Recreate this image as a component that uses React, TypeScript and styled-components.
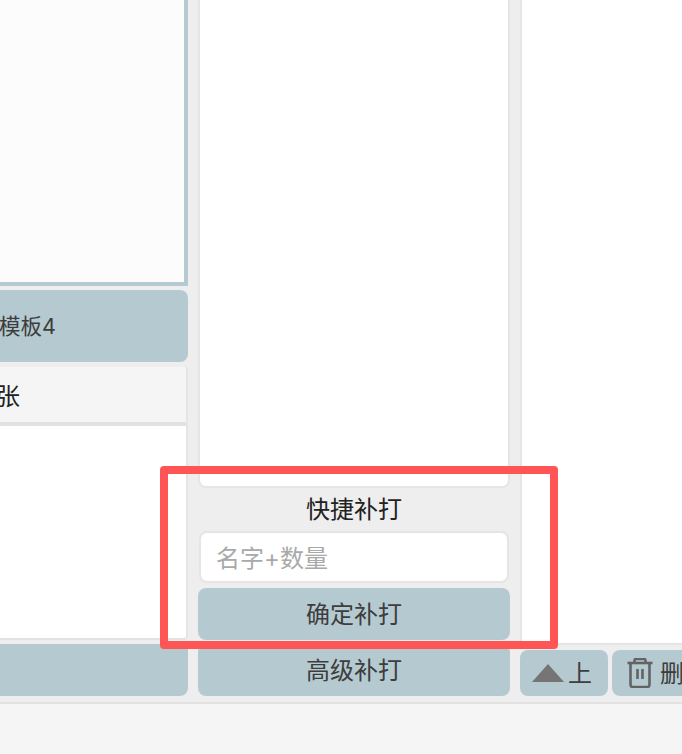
import React from "react";
import styled, { createGlobalStyle } from "styled-components";

const Global = createGlobalStyle`
  html, body { margin: 0; padding: 0; background: #f5f5f5; }
  * { box-sizing: border-box; }
  body { font-family: Inter, "Noto Sans CJK SC", sans-serif; color: #333; }
`;

const Page = styled.div`
  position: relative;
  width: 682px;
  height: 754px;
  overflow: hidden;
  display: flex;
  flex-direction: column;
  background: #f5f5f5;
`;

const Workspace = styled.main`
  height: 704px;
  flex: none;
  display: flex;
  background: #eeeeee;
  border-bottom: 2px solid #e2e2e2;
`;

const Column = styled.section<{ $width: number; $gap: number }>`
  width: ${(p) => p.$width}px;
  margin-right: ${(p) => p.$gap}px;
  flex: none;
  display: flex;
  flex-direction: column;
`;

const TemplatePreview = styled.div`
  height: 286px;
  background: #fcfcfc;
  border-right: 4px solid #b5cad0;
  border-bottom: 4px solid #b5cad0;
`;

const ActionButton = styled.button<{ $height: number; $top: number; $clipRight?: number }>`
  height: ${(p) => p.$height}px;
  margin: ${(p) => p.$top}px 0 0;
  padding: 0 ${(p) => p.$clipRight ?? 0}px 4px 0;
  width: 100%;
  flex: none;
  display: flex;
  align-items: center;
  justify-content: ${(p) => (p.$clipRight ? "flex-end" : "center")};
  border: 0;
  border-radius: 8px;
  background: #b5cad0;
  color: #3d3d3d;
  font: inherit;
  font-size: 24px;
  white-space: nowrap;
`;

const TemplateButton = styled(ActionButton)`
  border-radius: 0 8px 8px 0;
  font-size: 21.5px;
`;

const WideLeftButton = styled(ActionButton)`
  border-radius: 0 0 8px 0;
`;

const ListCard = styled.div`
  margin-top: 5px;
  height: 273px;
  flex: none;
  display: flex;
  flex-direction: column;
  background: #ffffff;
  border-right: 2px solid #e5e5e5;
  border-bottom: 2px solid #e2e2e2;
  border-radius: 0 4px 4px 0;
  overflow: hidden;
`;

const ListHeader = styled.div`
  height: 59px;
  flex: none;
  display: flex;
  align-items: center;
  justify-content: flex-end;
  padding-right: 166px;
  background: #f5f5f5;
  border-bottom: 4px solid #e2e2e2;
  color: #222;
  font-size: 24px;
  white-space: nowrap;
  overflow: hidden;
`;

const ListPanel = styled.div`
  height: 488px;
  flex: none;
  background: #ffffff;
  border: 2px solid #e5e5e5;
  border-top: 0;
  border-radius: 0 0 8px 8px;
`;

const SectionTitle = styled.div`
  height: 43px;
  flex: none;
  display: flex;
  align-items: center;
  justify-content: center;
  padding-bottom: 4px;
  color: #222;
  font-size: 24px;
`;

const QuickInput = styled.input`
  display: block;
  flex: none;
  width: 310px;
  height: 52px;
  margin-left: 1px;
  padding: 2px 15px 0;
  border: 2px solid #e5e5e5;
  border-radius: 8px;
  background: #ffffff;
  font: inherit;
  font-size: 24px;
  outline: none;
  &::placeholder { color: #a9a9a9; opacity: 1; }
`;

const RightPanel = styled.div`
  height: 645px;
  flex: none;
  background: #ffffff;
  border-left: 2px solid #e5e5e5;
  border-bottom: 2px solid #e5e5e5;
`;

const Toolbar = styled.div`
  display: flex;
  gap: 4px;
  margin-top: 5px;
`;

const ToolButton = styled.button<{ $width: number }>`
  width: ${(p) => p.$width}px;
  height: 46px;
  flex: none;
  display: flex;
  align-items: center;
  gap: 4px;
  padding: 0 0 0 12px;
  border: 0;
  border-radius: 8px;
  background: #b5cad0;
  color: #3d3d3d;
  font: inherit;
  font-size: 24px;
  white-space: nowrap;
  overflow: hidden;
`;

const TrashButton = styled(ToolButton)`
  padding-left: 15px;
  gap: 7px;
  border-radius: 8px 0 0 8px;
`;

const ToolLabel = styled.span`
  margin-bottom: 4px;
`;

const TrashGlyph = styled.svg`
  flex: none;
  filter: blur(0.45px);
`;

const Footer = styled.footer`
  flex: 1;
  background: #f5f5f5;
`;

const Highlight = styled.div`
  position: absolute;
  left: 160px;
  top: 466px;
  width: 398px;
  height: 183px;
  border: 8px solid #ff5555;
  border-radius: 4px;
  pointer-events: none;
`;

const TriangleIcon = () => (
  <svg width="32" height="18" viewBox="0 0 32 18" style={{ flex: "none" }}>
    <path d="M16 0 L32 18 L0 18 Z" fill="#757575" />
  </svg>
);

const TrashIcon = () => (
  <TrashGlyph width="26" height="30" viewBox="0 0 26 30" fill="none" stroke="#636363" strokeWidth="2.6">
    <path d="M0.5 5 H25.5" />
    <path d="M7.5 5 V2.5 Q7.5 1 9 1 H17 Q18.5 1 18.5 2.5 V5" />
    <path d="M3.5 5 V26.5 Q3.5 29 6 29 H20 Q22.5 29 22.5 26.5 V5" />
    <path d="M10.5 11 V21 M15.5 11 V21" />
  </TrashGlyph>
);

export default function App() {
  return (
    <Page>
      <Global />
      <Workspace>
        <Column $width={188} $gap={10}>
          <TemplatePreview />
          <TemplateButton $height={72} $top={4} $clipRight={132}>模板4</TemplateButton>
          <ListCard>
            <ListHeader>共1张</ListHeader>
          </ListCard>
          <WideLeftButton $height={52} $top={4} />
        </Column>
        <Column $width={312} $gap={10}>
          <ListPanel />
          <SectionTitle>快捷补打</SectionTitle>
          <QuickInput placeholder="名字+数量" />
          <ActionButton $height={52} $top={5}>确定补打</ActionButton>
          <ActionButton $height={52} $top={4}>高级补打</ActionButton>
        </Column>
        <Column $width={162} $gap={0}>
          <RightPanel />
          <Toolbar>
            <ToolButton $width={88}><TriangleIcon /><ToolLabel>上</ToolLabel></ToolButton>
            <TrashButton $width={70}><TrashIcon /><ToolLabel>删除</ToolLabel></TrashButton>
          </Toolbar>
        </Column>
      </Workspace>
      <Footer />
      <Highlight />
    </Page>
  );
}
